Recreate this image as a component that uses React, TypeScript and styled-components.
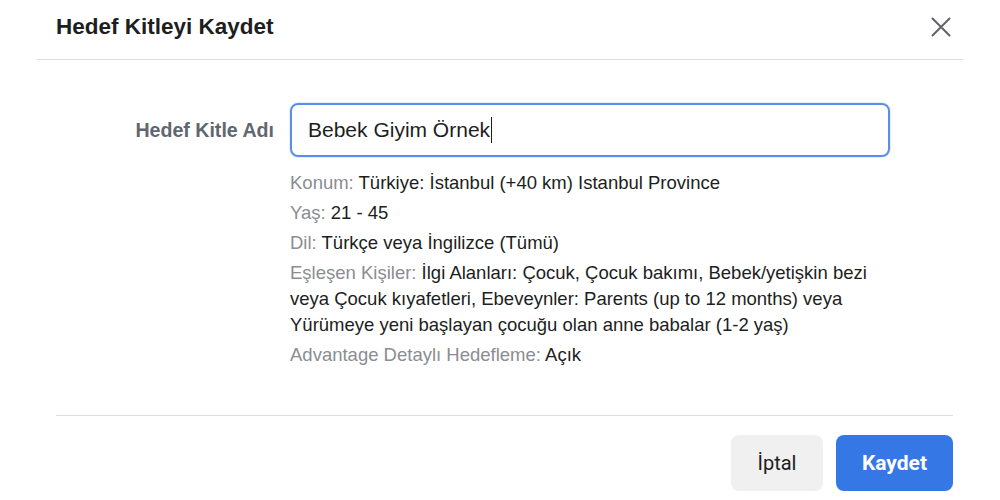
import React from "react";
import styled, { createGlobalStyle } from "styled-components";

const Global = createGlobalStyle`
  html, body { margin: 0; padding: 0; background: #ffffff; }
  body { font-family: "Liberation Sans", Arial, sans-serif; color: #1c1e21; }
  * { box-sizing: border-box; }
`;

const Dialog = styled.div`
  width: 1000px;
  height: 500px;
  background: #ffffff;
  display: flex;
  flex-direction: column;
  overflow: hidden;
`;

const Header = styled.div`
  margin: 0 37px;
  height: 60px;
  border-bottom: 1px solid #dcdee1;
  display: flex;
  align-items: center;
  justify-content: space-between;
  padding: 0 12px 6px 19px;
`;

const Title = styled.h1`
  margin: 0;
  font-size: 22.5px;
  font-weight: 700;
  color: #1c1e21;
`;

const CloseButton = styled.button`
  border: 0;
  background: transparent;
  padding: 0;
  width: 20px;
  height: 20px;
  display: flex;
  align-items: center;
  justify-content: center;
  cursor: pointer;
`;

const Body = styled.div`
  padding: 43px 0 0 0;
  height: 355px;
  display: grid;
  grid-template-columns: 274px 600px;
  column-gap: 16px;
  align-content: start;
`;

const Label = styled.label`
  justify-self: end;
  align-self: start;
  margin-top: 16px;
  font-size: 19.6px;
  font-weight: 700;
  color: #606770;
`;

const Field = styled.div`
  display: flex;
  flex-direction: column;
`;

const Input = styled.div`
  height: 54px;
  border: 2px solid #5b8ee6;
  border-radius: 8px;
  display: flex;
  align-items: center;
  padding-left: 16px;
  font-size: 21px;
  color: #1c1e21;
  box-shadow: 0 0 0 1px rgba(91, 142, 230, 0.15);
`;

const Caret = styled.span`
  display: inline-block;
  width: 1px;
  height: 26px;
  background: #1c1e21;
  margin-left: 1px;
`;

const Summary = styled.div`
  margin-top: 13px;
  display: flex;
  flex-direction: column;
  gap: 4px;
`;

const Item = styled.p`
  margin: 0;
  font-size: 18.5px;
  line-height: 26px;
  color: #1c1e21;
  width: 600px;
`;

const Key = styled.span`
  color: #8a8d91;
`;

const Footer = styled.div`
  margin: 0 47px 0 56px;
  border-top: 1px solid #dcdee1;
  padding-top: 19px;
  display: flex;
  justify-content: flex-end;
  gap: 13px;
`;

const Button = styled.button<{ $primary?: boolean }>`
  height: 56px;
  border: 0;
  border-radius: 8px;
  padding: 0;
  width: ${(p) => (p.$primary ? "117px" : "92px")};
  background: ${(p) => (p.$primary ? "#3578e5" : "#f0f0f0")};
  color: ${(p) => (p.$primary ? "#ffffff" : "#1c1e21")};
  font-family: "Roboto", "Liberation Sans", sans-serif;
  font-size: ${(p) => (p.$primary ? "21px" : "20px")};
  font-weight: ${(p) => (p.$primary ? 700 : 400)};
  cursor: pointer;
`;

const CloseIcon = () => (
  <svg width="20" height="20" viewBox="0 0 20 20" fill="none">
    <path d="M1.5 1.5 L18.5 18.5 M18.5 1.5 L1.5 18.5" stroke="#5f6368" strokeWidth="2" strokeLinecap="round" />
  </svg>
);

export default function App() {
  return (
    <>
      <Global />
      <Dialog>
        <Header>
          <Title>Hedef Kitleyi Kaydet</Title>
          <CloseButton aria-label="Kapat">
            <CloseIcon />
          </CloseButton>
        </Header>
        <Body>
          <Label>Hedef Kitle Adı</Label>
          <Field>
            <Input>
              Bebek Giyim Örnek
              <Caret />
            </Input>
            <Summary>
              <Item>
                <Key>Konum:</Key> Türkiye: İstanbul (+40 km) Istanbul Province
              </Item>
              <Item>
                <Key>Yaş:</Key> 21 - 45
              </Item>
              <Item>
                <Key>Dil:</Key> Türkçe veya İngilizce (Tümü)
              </Item>
              <Item>
                <Key>Eşleşen Kişiler:</Key> İlgi Alanları: Çocuk, Çocuk bakımı, Bebek/yetişkin bezi veya Çocuk kıyafetleri, Ebeveynler: Parents (up to 12 months) veya Yürümeye yeni başlayan çocuğu olan anne babalar (1-2 yaş)
              </Item>
              <Item>
                <Key>Advantage Detaylı Hedefleme:</Key> Açık
              </Item>
            </Summary>
          </Field>
        </Body>
        <Footer>
          <Button>İptal</Button>
          <Button $primary>Kaydet</Button>
        </Footer>
      </Dialog>
    </>
  );
}
